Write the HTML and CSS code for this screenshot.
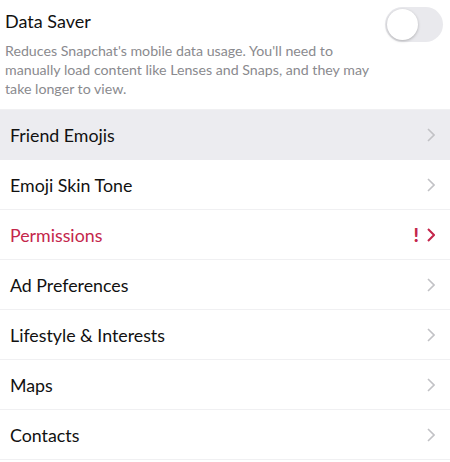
FILE: index.html
```html
<!DOCTYPE html>
<html lang="en">
  <head>
    <meta charset="UTF-8" />
    <meta name="viewport" content="width=device-width, initial-scale=1.0" />
    <title>Settings</title>
    <link rel="stylesheet" href="styles.css">
  </head>
  <body>
    <div class="saver">
      <div class="saver-top">
        <span class="saver-title">Data Saver</span>
        <div class="toggle"><div class="knob"></div></div>
      </div>
      <p class="saver-text">Reduces Snapchat's mobile data usage. You'll need to manually load content like Lenses and Snaps, and they may take longer to view.</p>
    </div>
    <div class="list">
      <div class="row active">
        <span>Friend Emojis</span>
        <svg class="chev" viewBox="0 0 8 14"><path d="M1 1l6 6-6 6" /></svg>
      </div>
      <div class="row">
        <span>Emoji Skin Tone</span>
        <svg class="chev" viewBox="0 0 8 14"><path d="M1 1l6 6-6 6" /></svg>
      </div>
      <div class="row alert">
        <span>Permissions</span>
        <div class="row-end">
          <span class="bang">!</span>
          <svg class="chev" viewBox="0 0 8 14"><path d="M1 1l6 6-6 6" /></svg>
        </div>
      </div>
      <div class="row">
        <span>Ad Preferences</span>
        <svg class="chev" viewBox="0 0 8 14"><path d="M1 1l6 6-6 6" /></svg>
      </div>
      <div class="row">
        <span>Lifestyle &amp; Interests</span>
        <svg class="chev" viewBox="0 0 8 14"><path d="M1 1l6 6-6 6" /></svg>
      </div>
      <div class="row">
        <span>Maps</span>
        <svg class="chev" viewBox="0 0 8 14"><path d="M1 1l6 6-6 6" /></svg>
      </div>
      <div class="row">
        <span>Contacts</span>
        <svg class="chev" viewBox="0 0 8 14"><path d="M1 1l6 6-6 6" /></svg>
      </div>
    </div>
  </body>
</html>
```

FILE: styles.css
```css
body {
  margin: 0;
  background: #fff;
  font-family: Lato, "Open Sans", sans-serif;
  color: #111;
}
.saver {
  padding: 7px 7px 0 5px;
  height: 102px;
  border-bottom: 1px solid #f0f0f2;
}
.saver-top {
  display: flex;
  justify-content: space-between;
  align-items: flex-start;
}
.saver-title {
  font-size: 18px;
  margin-top: 3px;
}
.toggle {
  width: 58px;
  height: 35px;
  border-radius: 18px;
  background: #e9e9ed;
  display: flex;
  align-items: center;
  padding-left: 2px;
  box-sizing: border-box;
}
.knob {
  width: 31px;
  height: 31px;
  border-radius: 50%;
  background: #fff;
  box-shadow: 0 1px 3px rgba(0, 0, 0, 0.25);
}
.saver-text {
  margin: -1px 0 0;
  font-size: 14.2px;
  line-height: 19px;
  color: #8a8a8e;
  width: 378px;
}
.row {
  height: 49px;
  border-bottom: 1px solid #f0f0f2;
  display: flex;
  align-items: center;
  justify-content: space-between;
  padding: 0 15px 0 10px;
  font-size: 17.8px;
}
.row.active {
  background: #ececf0;
  border-bottom-color: #ececf0;
}
.chev {
  width: 8px;
  height: 14px;
  fill: none;
  stroke: #c2c2c6;
  stroke-width: 1.6;
}
.alert {
  color: #c4264b;
}
.alert .chev {
  stroke: #c4264b;
  stroke-width: 2;
}
.row-end {
  display: flex;
  align-items: center;
  gap: 8px;
}
.bang {
  font-weight: 900;
  font-size: 19px;
}
```
